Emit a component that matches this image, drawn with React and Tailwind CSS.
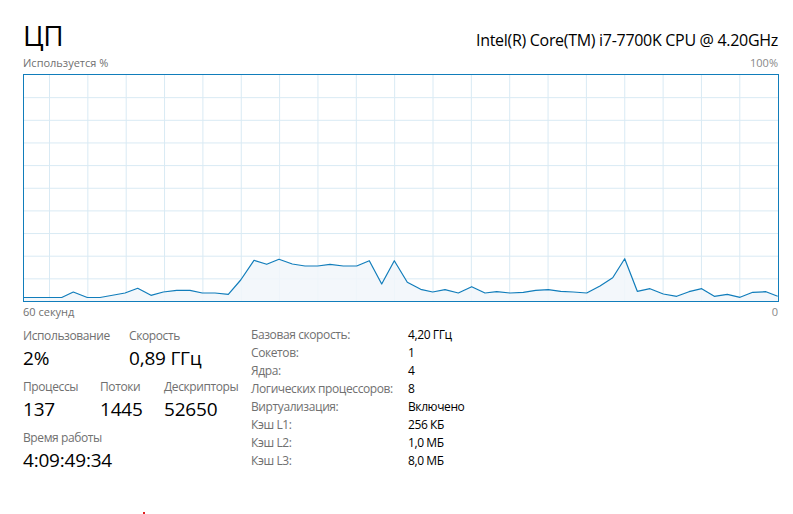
import React from "react";

const points = [
  [23, 297.5], [61.7, 297.5], [73.3, 292], [87.3, 297.5], [100, 297.5], [125, 293], [137.7, 288.3],
  [151, 295.3], [163.3, 292], [176.7, 290.3], [190, 290.3], [202.3, 293], [215, 293], [228.3, 294.3],
  [240.7, 280], [254, 260.3], [266.7, 264.3], [279, 259.3], [292.3, 264], [305, 266], [317.7, 266],
  [330, 264.3], [343.3, 266], [356.7, 266], [369.3, 260.7], [381.7, 284], [394.3, 260.7], [407.3, 282.3],
  [420.7, 289.3], [432.7, 292], [445, 289.7], [458.3, 293], [471.7, 286.7], [485, 293], [496.7, 291.7],
  [510, 293], [523.3, 292.3], [535.7, 290.3], [548.3, 289.7], [560.7, 291.3], [573.3, 292], [586.7, 293],
  [600, 286], [612.7, 277.7], [624.7, 258.7], [637.3, 291.3], [650, 288.7], [663.3, 294], [676.7, 296.3],
  [689, 291.7], [701.7, 288.7], [714.3, 296.3], [727.3, 294.3], [740, 297.3], [752.7, 292.3], [766, 291.7],
  [777.7, 296.3],
];

// page coords -> svg coords (inner area of the bordered box starts at 24,75)
const pts = points.map(([x, y]) => [x - 24, y - 75]);
const W = 754;
const H = 226;

const CpuGraph = () => {
  const vLines = [];
  for (let k = 0; k < 19; k++) vLines.push(25.5 + k * 38.35);
  const hLines = [];
  for (let k = 1; k < 10; k++) hLines.push(k * 22.65);

  const line = pts.map((p) => p.join(",")).join(" ");
  const area = `${pts[0][0]},${H} ${line} ${pts[pts.length - 1][0]},${H}`;

  return (
    <div className="w-[756px] h-[228px] border border-[#117dbb]">
      <svg width={W} height={H} viewBox={`0 0 ${W} ${H}`} className="block">
        {vLines.map((x) => (
          <line key={"v" + x} x1={x} y1={0} x2={x} y2={H} stroke="#d9eaf4" strokeWidth="1" />
        ))}
        {hLines.map((y) => (
          <line key={"h" + y} x1={0} y1={y} x2={W} y2={y} stroke="#d9eaf4" strokeWidth="1" />
        ))}
        <polygon points={area} fill="#f1f6fa" fillOpacity="0.85" />
        <polyline points={line} fill="none" stroke="#117dbb" strokeWidth="1.2" strokeLinejoin="round" />
      </svg>
    </div>
  );
};

const Stat = ({ label, value, className = "" }) => (
  <div className={className}>
    <div className="text-[12px] leading-[16px] text-[#707070] tracking-[-0.4px]">{label}</div>
    <div className="text-[19px] leading-[26px] text-black mt-[1px] tracking-[-0.2px]">{value}</div>
  </div>
);

const specs = [
  ["Базовая скорость:", "4,20 ГГц"],
  ["Сокетов:", "1"],
  ["Ядра:", "4"],
  ["Логических процессоров:", "8"],
  ["Виртуализация:", "Включено"],
  ["Кэш L1:", "256 КБ"],
  ["Кэш L2:", "1,0 МБ"],
  ["Кэш L3:", "8,0 МБ"],
];

export default function App() {
  return (
    <div className="relative w-[793px] h-[514px] bg-white font-['Segoe_UI','Open_Sans',sans-serif] overflow-hidden">
      <div className="pl-[23px] pr-[15px] pt-[18px]">
        <div className="flex items-baseline justify-between">
          <div className="text-[28px] leading-[34px] text-black tracking-[-0.5px]">ЦП</div>
          <div className="text-[16px] leading-[22px] text-black tracking-[-0.3px]">
            Intel(R) Core(TM) i7-7700K CPU @ 4.20GHz
          </div>
        </div>
        <div className="flex justify-between text-[11px] leading-[16px] text-[#707070] mt-[3px]">
          <span>Используется %</span>
          <span className="text-[#888]">100%</span>
        </div>
        <div className="mt-[3px]">
          <CpuGraph />
        </div>
        <div className="flex justify-between text-[11px] leading-[16px] text-[#707070] mt-[2px]">
          <span>60 секунд</span>
          <span className="text-[#888]">0</span>
        </div>

        <div className="flex mt-[8px]">
          <div className="w-[228px] flex flex-col gap-[8px]">
            <div className="flex">
              <Stat label="Использование" value="2%" className="w-[106px]" />
              <Stat label="Скорость" value="0,89 ГГц" />
            </div>
            <div className="flex">
              <Stat label="Процессы" value="137" className="w-[77px]" />
              <Stat label="Потоки" value="1445" className="w-[64px]" />
              <Stat label="Дескрипторы" value="52650" />
            </div>
            <div className="flex">
              <Stat label="Время работы" value="4:09:49:34" />
            </div>
          </div>
          <div className="grid grid-cols-[157px_auto] auto-rows-[18px] text-[12px] leading-[18px] -mt-[2px] tracking-[-0.4px]">
            {specs.map(([k, v]) => (
              <React.Fragment key={k}>
                <div className="text-[#707070]">{k}</div>
                <div className="text-black">{v}</div>
              </React.Fragment>
            ))}
          </div>
        </div>
      </div>
      <div className="absolute left-[143px] top-[512px] w-[2px] h-[2px] bg-[#e02020]" />
    </div>
  );
}
